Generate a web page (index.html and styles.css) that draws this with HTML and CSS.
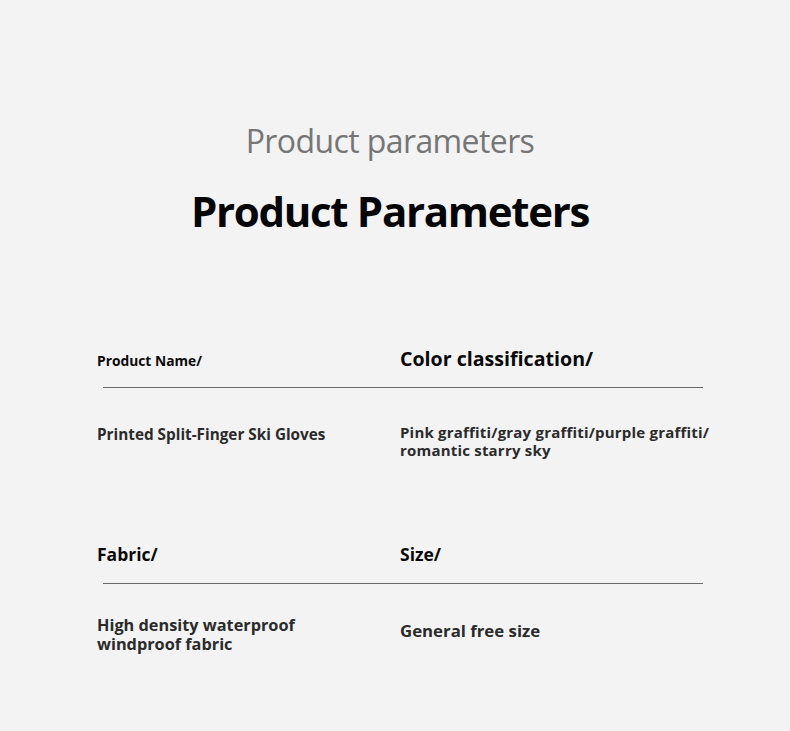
FILE: index.html
```html
<!DOCTYPE html>
<html lang="en">
<head>
<meta charset="utf-8">
<title>Product Parameters</title>
<link rel="stylesheet" href="styles.css">
</head>
<body>
<main class="page">
  <header class="heading">
    <p class="subtitle">Product parameters</p>
    <h1 class="title">Product Parameters</h1>
  </header>

  <section class="block block-first">
    <div class="row labels">
      <div class="label label-sm">Product Name/</div>
      <div class="label label-lg">Color classification/</div>
    </div>
    <div class="rule"></div>
    <div class="row values values-first">
      <div class="value value-sm">Printed Split-Finger Ski Gloves</div>
      <div class="value value-sm value-wide">Pink graffiti/gray graffiti/purple graffiti/<br>romantic starry sky</div>
    </div>
  </section>

  <section class="block block-second">
    <div class="row labels">
      <div class="label label-md">Fabric/</div>
      <div class="label label-md">Size/</div>
    </div>
    <div class="rule"></div>
    <div class="row values values-second">
      <div class="value value-md">High density waterproof<br>windproof fabric</div>
      <div class="value value-md value-single">General free size</div>
    </div>
  </section>
</main>
</body>
</html>
```

FILE: styles.css
```css
html, body {
  margin: 0;
  padding: 0;
  background: #f3f3f3;
}
body {
  font-family: "Open Sans", "Noto Sans", sans-serif;
  color: #111;
  width: 790px;
  height: 731px;
  overflow: hidden;
}
.page {
  display: flex;
  flex-direction: column;
}
.heading {
  display: flex;
  flex-direction: column;
  align-items: center;
  padding: 117px 10px 0 0;
}
.subtitle {
  margin: 0;
  font-size: 32px;
  line-height: 48px;
  font-weight: 400;
  color: #767676;
  letter-spacing: -0.6px;
}
.title {
  margin: 16px 0 0;
  font-size: 42px;
  line-height: 60px;
  font-weight: 700;
  color: #050505;
  letter-spacing: -1.3px;
}
.block {
  display: flex;
  flex-direction: column;
}
.block-first {
  margin-top: 100px;
}
.block-second {
  margin-top: 78px;
}
.row {
  display: grid;
  grid-template-columns: 303px 340px;
  padding-left: 97px;
  align-items: end;
}
.labels {
  height: 32px;
}
.label {
  font-weight: 700;
  color: #0a0a0a;
}
.label-sm {
  font-size: 13.8px;
  line-height: 20px;
  padding-bottom: 2px;
}
.label-lg {
  font-size: 19.6px;
  line-height: 28px;
}
.label-md {
  font-size: 17.5px;
  line-height: 26px;
  padding-bottom: 2px;
}
.rule {
  margin: 14px 0 0 103px;
  width: 600px;
  height: 1px;
  background: #6a6a6a;
}
.values {
  align-items: start;
}
.values-first {
  margin-top: 37px;
}
.values-second {
  margin-top: 32px;
}
.value {
  font-weight: 700;
  color: #2b2b2b;
}
.value-sm {
  font-size: 15.3px;
  line-height: 18px;
}
.value-wide {
  font-size: 15px;
  letter-spacing: 0.2px;
  margin-top: -2px;
}
.value-md {
  font-size: 16.3px;
  line-height: 19px;
}
.value-single {
  padding-top: 5px;
  font-size: 16.8px;
}
```
